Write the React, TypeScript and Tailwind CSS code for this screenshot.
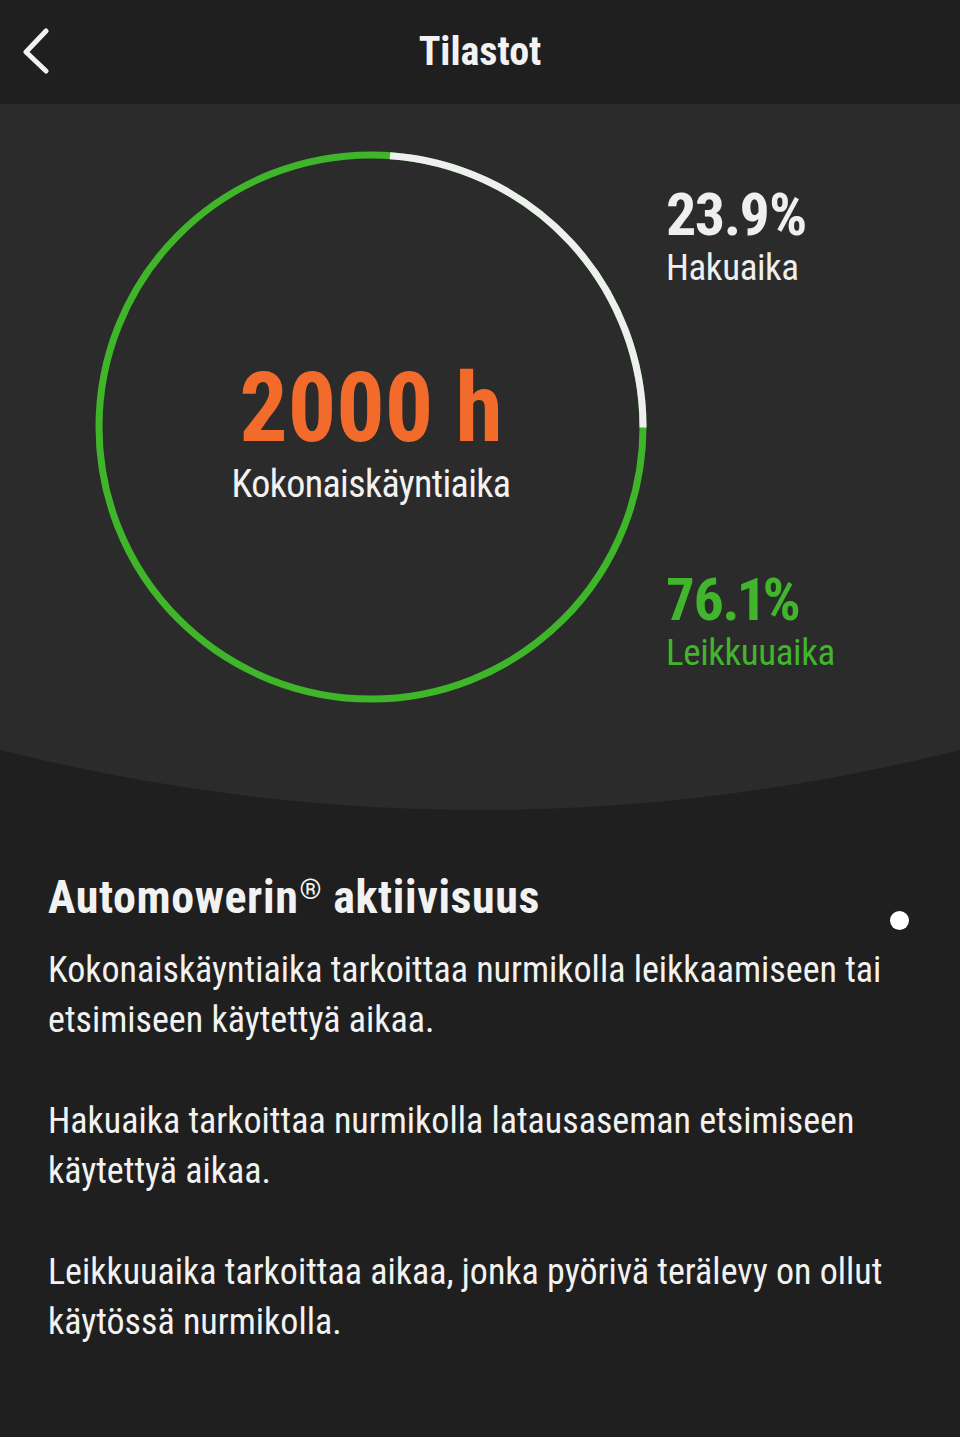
import React from "react";

const CIRCLE_R = 272;
const CIRCUMFERENCE = 2 * Math.PI * CIRCLE_R;

const Header = () => (
  <div className="h-[104px] bg-[#1f1f1f] grid grid-cols-[96px_1fr_96px] items-center">
    <div className="pl-[18px] pb-[4px] flex items-center">
      <svg width="34" height="48" viewBox="0 0 34 48" fill="none">
        <path
          d="M28 5 L8 26 L28 45"
          stroke="#f2f2f2"
          strokeWidth="5"
          strokeLinecap="round"
          strokeLinejoin="round"
        />
      </svg>
    </div>
    <div className="text-center text-[#f2f2f2] text-[40px] font-bold leading-none">Tilastot</div>
    <div />
  </div>
);

const Ring = () => {
  const searchShare = 0.239;
  return (
    <div className="grid w-[560px] h-[560px]">
      <svg width="560" height="560" viewBox="0 0 560 560" className="[grid-area:1/1]">
        <circle cx="280" cy="280" r={CIRCLE_R} fill="none" stroke="#3fb52a" strokeWidth="7" />
        <circle
          cx="280"
          cy="280"
          r={CIRCLE_R}
          fill="none"
          stroke="#efefef"
          strokeWidth="7"
          strokeDasharray={`${CIRCUMFERENCE * searchShare} ${CIRCUMFERENCE}`}
          transform="rotate(-86 280 280)"
        />
      </svg>
      <div className="[grid-area:1/1] flex flex-col items-center pt-[213px]">
        <div className="text-[#f36b2b] text-[96px] font-bold leading-none">2000 h</div>
        <div className="text-[#f2f2f2] text-[38px] leading-none tracking-[-0.6px] mt-[9px]">
          Kokonaiskäyntiaika
        </div>
      </div>
    </div>
  );
};

const Stat = ({ value, label, green }: { value: string; label: string; green?: boolean }) => (
  <div className={green ? "text-[#41b52c]" : "text-[#efefef]"}>
    <div className="text-[60px] font-bold leading-none proportional-nums tracking-[-1.5px]">{value}</div>
    <div className="text-[37px] leading-none tracking-[-0.4px] mt-[4px]">{label}</div>
  </div>
);

const StatsPanel = () => (
  <div>
    <div className="bg-[#2b2b2b] h-[646px] flex pt-[43px] pl-[91px]">
      <Ring />
      <div className="ml-[15px] flex flex-col pt-[38px]">
        <Stat value="23.9%" label="Hakuaika" />
        <div className="mt-[284px]">
          <Stat value="76.1%" label="Leikkuuaika" green />
        </div>
      </div>
    </div>
    <svg width="960" height="60" viewBox="0 0 960 60" className="block">
      <path d="M0 0 Q480 120 960 0 Z" fill="#2b2b2b" />
    </svg>
  </div>
);

const Info = () => (
  <div className="px-[48px] pt-[64px] pb-[80px] text-[#f2f2f2]">
    <div className="flex items-start justify-between">
      <h2 className="text-[46px] font-bold leading-none tracking-[0.6px]">
        Automowerin
        <span className="inline-block text-[28px] font-normal relative top-[-14px] ml-[1px]">®</span>{" "}
        aktiivisuus
      </h2>
      <div className="w-[19px] h-[19px] rounded-full bg-white mt-[37px] mr-[3px]" />
    </div>
    <div className="text-[36px] leading-[50px] mt-[15px] flex flex-col gap-[51px]">
      <p>
        Kokonaiskäyntiaika tarkoittaa nurmikolla leikkaamiseen tai
        <br />
        etsimiseen käytettyä aikaa.
      </p>
      <p>
        Hakuaika tarkoittaa nurmikolla latausaseman etsimiseen
        <br />
        käytettyä aikaa.
      </p>
      <p>
        Leikkuuaika tarkoittaa aikaa, jonka pyörivä terälevy on ollut
        <br />
        käytössä nurmikolla.
      </p>
    </div>
  </div>
);

export default function App() {
  return (
    <div className="w-[960px] min-h-[1437px] bg-[#1f1f1f] font-['Roboto',sans-serif] [font-stretch:75%]">
      <Header />
      <StatsPanel />
      <Info />
    </div>
  );
}
